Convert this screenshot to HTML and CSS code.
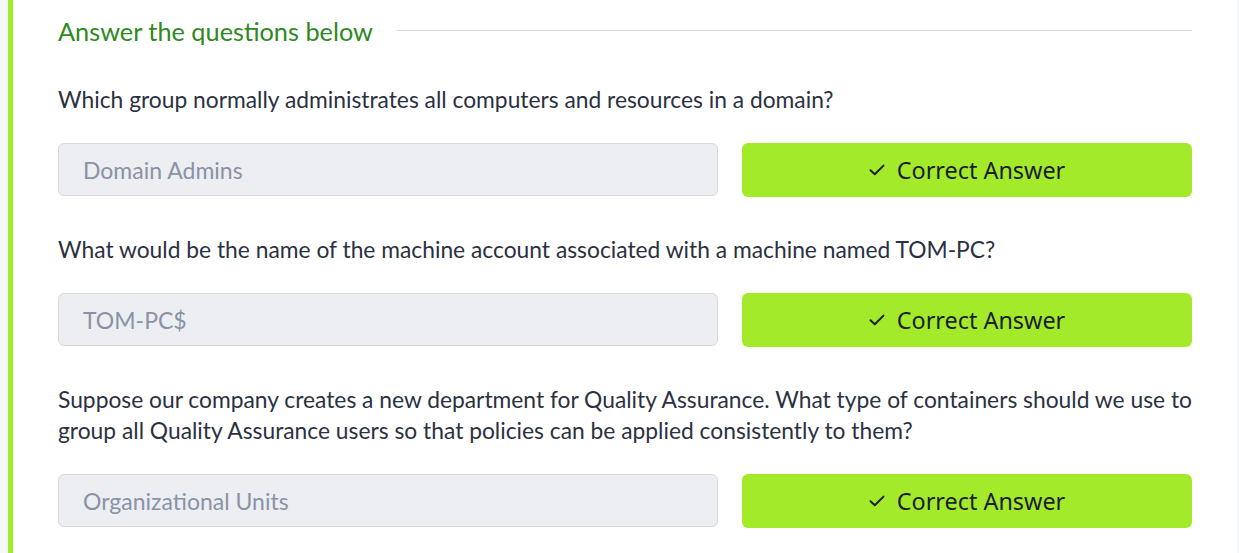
FILE: index.html
```html
<!DOCTYPE html>
<html lang="en">
<head>
<meta charset="utf-8">
<title>Answer the questions below</title>
<link rel="stylesheet" href="styles.css">
</head>
<body>
<div class="card">
  <div class="heading">
    <h3 class="heading-title">Answer the questions below</h3>
    <div class="heading-rule"></div>
  </div>

  <div class="question">
    <p class="question-text">Which group normally administrates all computers and resources in a domain?</p>
    <div class="answer-row">
      <div class="answer-input">Domain Admins</div>
      <button class="answer-btn" type="button">
        <svg class="check" viewBox="0 0 16 12" width="16" height="12"><path d="M1.5 6.2 L5.8 10.3 L14.5 1.6" fill="none" stroke="currentColor" stroke-width="2" stroke-linecap="round" stroke-linejoin="round"/></svg>
        <span>Correct Answer</span>
      </button>
    </div>
  </div>

  <div class="question">
    <p class="question-text">What would be the name of the machine account associated with a machine named TOM-PC?</p>
    <div class="answer-row">
      <div class="answer-input">TOM-PC$</div>
      <button class="answer-btn" type="button">
        <svg class="check" viewBox="0 0 16 12" width="16" height="12"><path d="M1.5 6.2 L5.8 10.3 L14.5 1.6" fill="none" stroke="currentColor" stroke-width="2" stroke-linecap="round" stroke-linejoin="round"/></svg>
        <span>Correct Answer</span>
      </button>
    </div>
  </div>

  <div class="question">
    <p class="question-text">Suppose our company creates a new department for Quality Assurance. What type of containers should we use to group all Quality Assurance users so that policies can be applied consistently to them?</p>
    <div class="answer-row">
      <div class="answer-input">Organizational Units</div>
      <button class="answer-btn" type="button">
        <svg class="check" viewBox="0 0 16 12" width="16" height="12"><path d="M1.5 6.2 L5.8 10.3 L14.5 1.6" fill="none" stroke="currentColor" stroke-width="2" stroke-linecap="round" stroke-linejoin="round"/></svg>
        <span>Correct Answer</span>
      </button>
    </div>
  </div>
</div>
</body>
</html>
```

FILE: styles.css
```css
html, body {
  margin: 0;
  padding: 0;
}
body {
  background: #f7f8fa;
  padding: 0 2px 0 8px;
  font-family: "Lato", "Noto Sans", sans-serif;
  color: #2b3141;
  overflow: hidden;
}
.card {
  background: #ffffff;
  border-left: 5px solid #a3ea2a;
  padding: 11px 45px 30px 45px;
  min-height: 553px;
  box-sizing: border-box;
}
.heading {
  display: flex;
  align-items: center;
  gap: 24px;
  height: 40px;
  margin-bottom: 33px;
}
.heading-title {
  margin: 0;
  font-weight: 400;
  font-size: 25.3px;
  color: #2e8a1f;
  white-space: nowrap;
}
.heading-rule {
  flex: 1;
  height: 1px;
  background: #d3d7dd;
  margin-top: -2px;
}
.question {
  margin-bottom: 37px;
}
.question-text {
  margin: 0 -12px 28px 0;
  font-size: 22.8px;
  line-height: 31px;
}
.answer-row {
  display: grid;
  grid-template-columns: 1fr 450px;
  gap: 24px;
  align-items: start;
}
.answer-input {
  height: 53px;
  box-sizing: border-box;
  border: 1px solid #d5d8de;
  border-radius: 6px;
  background: #eceef2;
  color: #8a92a6;
  font-size: 23px;
  padding: 0 24px;
  display: flex;
  align-items: center;
}
.answer-btn {
  height: 54px;
  border: none;
  border-radius: 6px;
  background: #a3ea2a;
  color: #1b1f2e;
  font-family: "Noto Sans", "Open Sans", sans-serif;
  font-size: 23.4px;
  display: flex;
  align-items: center;
  justify-content: center;
  gap: 12px;
  padding: 0;
}
.check {
  display: block;
}
```
